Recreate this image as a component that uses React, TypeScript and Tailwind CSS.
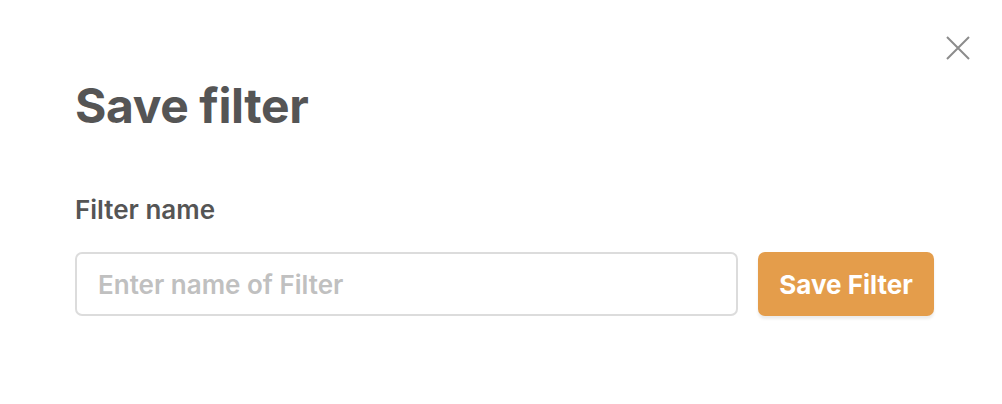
import React from 'react';

const font = { fontFamily: 'Inter, "Noto Sans", sans-serif' };

export default function App() {
  return (
    <div className="relative w-[1002px] h-[404px] bg-white text-[#555555]" style={font}>
      <button className="absolute right-[32px] top-[36px] w-[24px] h-[24px] text-[#8c8c8c]" aria-label="Close">
        <svg viewBox="0 0 24 24" width="24" height="24" fill="none" stroke="currentColor" strokeWidth="2">
          <path d="M1 1L23 23M23 1L1 23" />
        </svg>
      </button>

      <div className="pl-[75px] pr-[68px] pt-[78px]">
        <h2 className="text-[48px] leading-[56px] font-bold tracking-[-0.4px]">Save filter</h2>

        <label className="block mt-[60px] text-[26px] leading-[32px] font-semibold">Filter name</label>

        <div className="mt-[26px] flex items-center gap-[20px]">
          <input
            type="text"
            placeholder="Enter name of Filter"
            className="flex-1 h-[64px] rounded-[7px] border-2 border-[#dcdcdc] px-[21px] text-[26px] font-semibold outline-none placeholder:text-[#c0c0c0]"
            style={font}
          />
          <button
            className="h-[64px] w-[176px] rounded-[7px] bg-[#e49d4b] text-white text-[26px] font-bold shadow-[0_3px_3px_rgba(0,0,0,0.08)]"
            style={font}
          >
            Save Filter
          </button>
        </div>
      </div>
    </div>
  );
}
